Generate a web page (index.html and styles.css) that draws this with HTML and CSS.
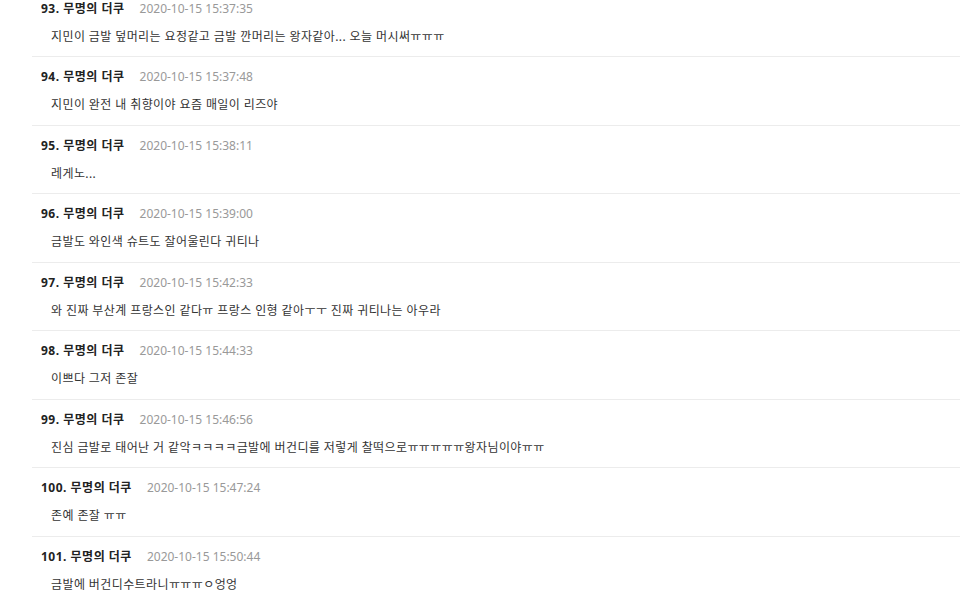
FILE: index.html
```html
<!DOCTYPE html>
<html lang="ko">
<head>
    <meta charset="UTF-8">
    <meta name="viewport" content="width=device-width, initial-scale=1.0">
    <title>댓글</title>
    <link rel="stylesheet" href="styles.css">
</head>
<body>
    <div class="comment-list">
        <div class="comment">
            <div class="comment-head"><span class="nick">93. 무명의 더쿠</span><span class="date">2020-10-15 15:37:35</span></div>
            <div class="comment-body">지민이 금발 덮머리는 요정같고 금발 깐머리는 왕자같아... 오늘 머시써ㅠㅠㅠ</div>
        </div>
        <div class="comment">
            <div class="comment-head"><span class="nick">94. 무명의 더쿠</span><span class="date">2020-10-15 15:37:48</span></div>
            <div class="comment-body">지민이 완전 내 취향이야 요즘 매일이 리즈야</div>
        </div>
        <div class="comment">
            <div class="comment-head"><span class="nick">95. 무명의 더쿠</span><span class="date">2020-10-15 15:38:11</span></div>
            <div class="comment-body">레게노...</div>
        </div>
        <div class="comment">
            <div class="comment-head"><span class="nick">96. 무명의 더쿠</span><span class="date">2020-10-15 15:39:00</span></div>
            <div class="comment-body">금발도 와인색 슈트도 잘어울린다 귀티나</div>
        </div>
        <div class="comment">
            <div class="comment-head"><span class="nick">97. 무명의 더쿠</span><span class="date">2020-10-15 15:42:33</span></div>
            <div class="comment-body">와 진짜 부산계 프랑스인 같다ㅠ 프랑스 인형 같아ㅜㅜ 진짜 귀티나는 아우라</div>
        </div>
        <div class="comment">
            <div class="comment-head"><span class="nick">98. 무명의 더쿠</span><span class="date">2020-10-15 15:44:33</span></div>
            <div class="comment-body">이쁘다 그저 존잘</div>
        </div>
        <div class="comment">
            <div class="comment-head"><span class="nick">99. 무명의 더쿠</span><span class="date">2020-10-15 15:46:56</span></div>
            <div class="comment-body">진심 금발로 태어난 거 같악ㅋㅋㅋㅋ금발에 버건디를 저렇게 찰떡으로ㅠㅠㅠㅠㅠ왕자님이야ㅠㅠ</div>
        </div>
        <div class="comment">
            <div class="comment-head"><span class="nick">100. 무명의 더쿠</span><span class="date">2020-10-15 15:47:24</span></div>
            <div class="comment-body">존예 존잘 ㅠㅠ</div>
        </div>
        <div class="comment">
            <div class="comment-head"><span class="nick">101. 무명의 더쿠</span><span class="date">2020-10-15 15:50:44</span></div>
            <div class="comment-body">금발에 버건디수트라니ㅠㅠㅠㅇ엉엉</div>
        </div>
    </div>
</body>
</html>
```
FILE: styles.css
```css
/* 댓글 목록 */
body {
    margin: 0;
    background: #fff;
    font-family: "Noto Sans", "Noto Sans CJK KR", sans-serif;
    color: #333;
    overflow: hidden;
}

.comment-list {
    margin-top: -12.5px; /* 스크롤된 상태 */
    padding-left: 32px;
}

.comment {
    border-top: 1px solid #ececec;
    padding: 10px 0 9.5px 9px;
}

.comment-head {
    display: flex;
    align-items: center;
    gap: 15px;
    font-size: 12px;
    line-height: 20px;
}

.comment-head .nick {
    font-weight: bold;
    color: #222;
    letter-spacing: 0.5px;
}

.comment-head .date {
    color: #999;
}

.comment-body {
    margin-top: 8px;
    padding-left: 10px;
    font-size: 12px;
    line-height: 20px;
    letter-spacing: 0.4px;
    color: #333;
}
```
